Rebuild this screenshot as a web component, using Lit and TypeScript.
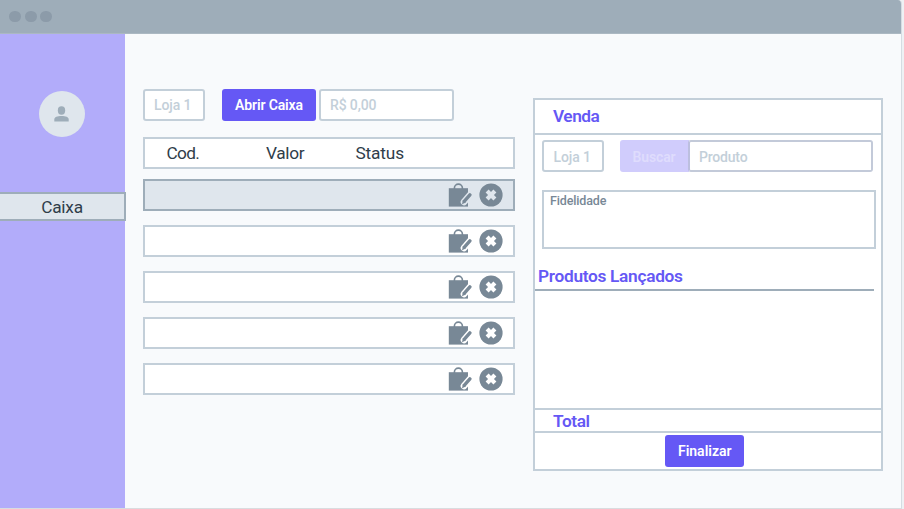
import { LitElement, html, svg, css } from "lit";
import { customElement, property } from "lit/decorators.js";
import { classMap } from "lit/directives/class-map.js";

@customElement("order-row")
class OrderRow extends LitElement {
  @property({ type: Boolean }) selected = false;
  static styles = css`
    :host { display: block; }
    .row {
      box-sizing: border-box; height: 32px; border: 2px solid #c3cfd9; background: #fff;
      display: flex; align-items: center; justify-content: flex-end; padding-right: 10px;
    }
    .row.selected { background: #dfe6ed; border-color: #9eadb9; --face: #dfe6ed; }
    .bag { width: 24px; height: 24px; margin-right: 7.5px; }
    .close { width: 24px; height: 24px; }
    .ink { fill: #788896; }
    .handle { fill: none; stroke: #788896; stroke-width: 1.6; }
    .gap { stroke: var(--face, #fff); stroke-width: 6.6; stroke-linecap: round; }
    .pen { stroke: #788896; stroke-width: 3.4; stroke-linecap: round; }
    .cross { stroke: var(--face, #fff); stroke-width: 4.2; }
  `;
  render() {
    return html`<div class=${classMap({ row: true, selected: this.selected })}>
      <svg class="bag" viewBox="0 0 24 24">
        ${svg`<path class="ink" d="M.8 5.2H20V23.6H.8z"/>
        <path class="handle" d="M6.4 6V4.9a4 3.8 0 0 1 8 0V6"/>
        <path class="gap" d="M16 19 22 12"/>
        <path class="pen" d="M16.4 18.1 21.9 11.9"/>
        <path class="ink" d="M14.9 17 14 21.2 17.9 19.6z"/>`}
      </svg>
      <svg class="close" viewBox="0 0 24 24">
        ${svg`<circle class="ink" cx="12" cy="12" r="11.6"/>
        <path class="cross" d="M8.1 8.1 15.9 15.9M15.9 8.1 8.1 15.9"/>`}
      </svg>
    </div>`;
  }
}

@customElement("app-root")
class AppRoot extends LitElement {
  static styles = css`
    :host {
      display: block; width: 904px; height: 509px; overflow: hidden; background: #eef1f4;
      font-family: Roboto, "Liberation Sans", sans-serif; color: #2f3d4a; line-height: 1;
    }
    * { box-sizing: border-box; }
    .window {
      width: 901.5px; height: 509px; border-right: 1px solid #d5dce2; border-bottom: 1px solid #d9dcdf;
      border-radius: 0 4px 0 0; overflow: hidden; background: #f8fafc; display: flex; flex-direction: column;
    }
    .bar {
      height: 34px; flex: none; background: #9eadb9; border-bottom: 1px solid #abb8c2;
      display: flex; align-items: center; gap: 3.6px; padding-left: 9.4px;
    }
    .dot { width: 11.8px; height: 11.8px; border-radius: 50%; background: #8c9ba9; }
    .body { flex: 1; display: flex; min-height: 0; }
    .side { width: 124.5px; background: #b2acfa; flex: none; padding-top: 57.3px; }
    .avatar {
      width: 46px; height: 46px; margin-left: 38.5px; border-radius: 50%; background: #dfe6ed;
      display: flex; align-items: center; justify-content: center;
    }
    .avatar svg { width: 15px; height: 16px; fill: #9eadb9; }
    .nav {
      width: 128px; height: 29px; margin: 54.7px 0 0 -2px; border: 2px solid #9eadb9; background: #dfe6ed;
      display: flex; align-items: center; justify-content: center; font-size: 17.3px; letter-spacing: -.25px;
      padding: 2px 0 0; position: relative;
    }
    .orders { margin: 55px 0 0 18px; width: 372.5px; flex: none; }
    .tools { display: flex; }
    .field {
      height: 32px; border: 2px solid #c3cfd9; border-radius: 3px; background: #fff; color: #c3cfd9;
      font-size: 14px; font-weight: 500; display: flex; align-items: center; padding-left: 9.5px;
      white-space: nowrap; letter-spacing: -.13px;
    }
    .btn {
      height: 32px; border-radius: 3px; background: #6558f5; color: #fff; font-size: 14px; font-weight: 600;
      display: flex; align-items: center; justify-content: center; white-space: nowrap; letter-spacing: -.13px;
    }
    .store { width: 62px; }
    .open { width: 94px; margin: 0 3px 0 17px; padding-left: 1px; }
    .amount { width: 135px; }
    .head {
      height: 32px; margin: 16px 0 10px; border: 2px solid #c3cfd9; background: #fff;
      display: grid; grid-template-columns: 99.5px 89.5px 1fr; align-items: center; padding: 2px 0 0 22px;
      font-size: 17.3px; letter-spacing: -.35px;
    }
    .head span:first-child { letter-spacing: -.7px; }
    .head span:last-child { letter-spacing: -.15px; }
    .list { display: flex; flex-direction: column; gap: 14px; }
    .sale {
      width: 349.5px; height: 373px; margin: 64px 0 0 18px; border: 2px solid #c3cfd9; background: #fff;
      display: flex; flex-direction: column; flex: none;
    }
    .title {
      color: #6558f5; font-size: 17.3px; font-weight: 600; letter-spacing: -.3px;
      display: flex; align-items: center; white-space: nowrap;
    }
    .top { height: 34.5px; border-bottom: 2px solid #c3cfd9; padding: 1px 0 0 18px; letter-spacing: -.5px; }
    .search { display: flex; padding: 5.5px 0 0 7px; }
    .search > * { padding-top: 1px; }
    .find { width: 69px; margin-left: 15.5px; background: #d0ccfc; color: #dfdcfd; border-radius: 3px 0 0 3px; }
    .product { width: 185.5px; margin-left: -1px; border-color: #c3cad9; border-left-color: #bcbfdf; letter-spacing: -.2px; }
    .loyalty {
      width: 333.5px; height: 59px; margin: 18px 0 0 7px; border: 2px solid #c3cfd9; color: #788896;
      font-size: 12.5px; font-weight: 500; letter-spacing: -.15px; padding: 3px 0 0 6px; flex: none;
    }
    .sub { height: 42px; width: 339px; border-bottom: 2px solid #9eadb9; padding: 15px 0 0 3px; flex: none; }
    .lines { flex: 1; }
    .total {
      height: 25px; border: solid #c3cfd9; border-width: 2px 0; padding: 3px 0 0 18px; flex: none;
      letter-spacing: -.4px;
    }
    .foot { height: 36.5px; display: flex; justify-content: center; padding: 2px 6px 0 0; flex: none; }
    .finish { width: 79px; letter-spacing: 0; }
  `;
  render() {
    return html`<div class="window">
      <div class="bar"><i class="dot"></i><i class="dot"></i><i class="dot"></i></div>
      <div class="body">
        <nav class="side">
          <div class="avatar">
            <svg viewBox="0 0 15 16"><ellipse cx="7.5" cy="4.5" rx="3.7" ry="4.2"/><path d="M.3 15.4v-2c0-2.2 3-3.4 7.2-3.4s7.2 1.2 7.2 3.4v2z"/></svg>
          </div>
          <div class="nav">Caixa</div>
        </nav>
        <section class="orders">
          <div class="tools">
            <div class="field store">Loja 1</div>
            <div class="btn open">Abrir Caixa</div>
            <div class="field amount">R$ 0,00</div>
          </div>
          <div class="head"><span>Cod.</span><span>Valor</span><span>Status</span></div>
          <div class="list">
            ${[true, false, false, false, false].map((s) => html`<order-row ?selected=${s}></order-row>`)}
          </div>
        </section>
        <section class="sale">
          <div class="title top">Venda</div>
          <div class="search">
            <div class="field store">Loja 1</div>
            <div class="btn find">Buscar</div>
            <div class="field product">Produto</div>
          </div>
          <div class="loyalty">Fidelidade</div>
          <div class="title sub">Produtos Lançados</div>
          <div class="lines"></div>
          <div class="title total">Total</div>
          <div class="foot"><div class="btn finish">Finalizar</div></div>
        </section>
      </div>
    </div>`;
  }
}
